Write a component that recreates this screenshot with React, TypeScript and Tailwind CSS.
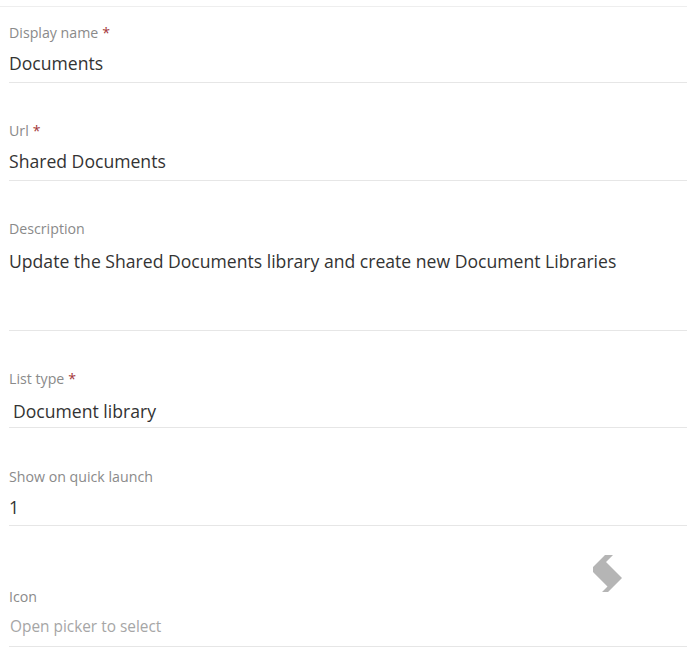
import React from 'react';

type FieldProps = {
  label: string;
  required?: boolean;
  children: React.ReactNode;
  className?: string;
};

function Field({ label, required, children, className = '' }: FieldProps) {
  return (
    <div className={`ml-[9px] border-b border-[#e6e6e6] ${className}`}>
      <div className="h-[20px] text-[14.2px] leading-[20px] text-[#8a8a8a]">
        {label}
        {required && <span className="ml-[4px] text-[#a4373a]">*</span>}
      </div>
      {children}
    </div>
  );
}

// zigzag glyph shown by the icon picker preview
function IconPreview() {
  return (
    <svg className="absolute left-[590px] top-[553px]" width="35" height="42" viewBox="0 0 35 42">
      <path d="M15 2 L23 2 L16 9 L32 25 L18 39 L12 39 L17.5 33.5 L3 19 L3 14 Z" fill="#b5b5b5" />
    </svg>
  );
}

export default function App() {
  return (
    <div
      className="relative min-h-screen w-[687px] bg-white text-[#333333]"
      style={{ fontFamily: "'Open Sans', 'Noto Sans', sans-serif" }}
    >
      <div className="h-[6px]" />
      <div className="border-t border-[#eeeeee]" />

      <Field label="Display name" required className="pt-[16px] pb-[7px]">
        <div className="mt-[8px] h-[24px] text-[17.6px] leading-[24px]">Documents</div>
      </Field>

      <Field label="Url" required className="pt-[38px] pb-[7px]">
        <div className="mt-[8px] h-[24px] text-[17.6px] leading-[24px]">Shared Documents</div>
      </Field>

      <Field label="Description" className="pt-[38px]">
        <div className="mt-[10px] h-[81px] text-[17.6px] leading-[24px]">
          Update the Shared Documents library and create new Document Libraries
        </div>
      </Field>

      <Field label="List type" required className="pt-[38px] pb-[4px]">
        <div className="mt-[10px] h-[24px] pl-[4px] text-[17.6px] leading-[24px]">Document library</div>
      </Field>

      <Field label="Show on quick launch" className="pt-[39px] pb-[6px]">
        <div className="mt-[8px] h-[24px] text-[17.6px] leading-[24px]">1</div>
      </Field>

      <Field label="Icon" className="pt-[61px] pb-[7px]">
        <div className="mt-[8px] h-[24px] pl-[1px] text-[15.4px] leading-[24px] text-[#a6a6a6]">
          Open picker to select
        </div>
      </Field>

      <IconPreview />
    </div>
  );
}
